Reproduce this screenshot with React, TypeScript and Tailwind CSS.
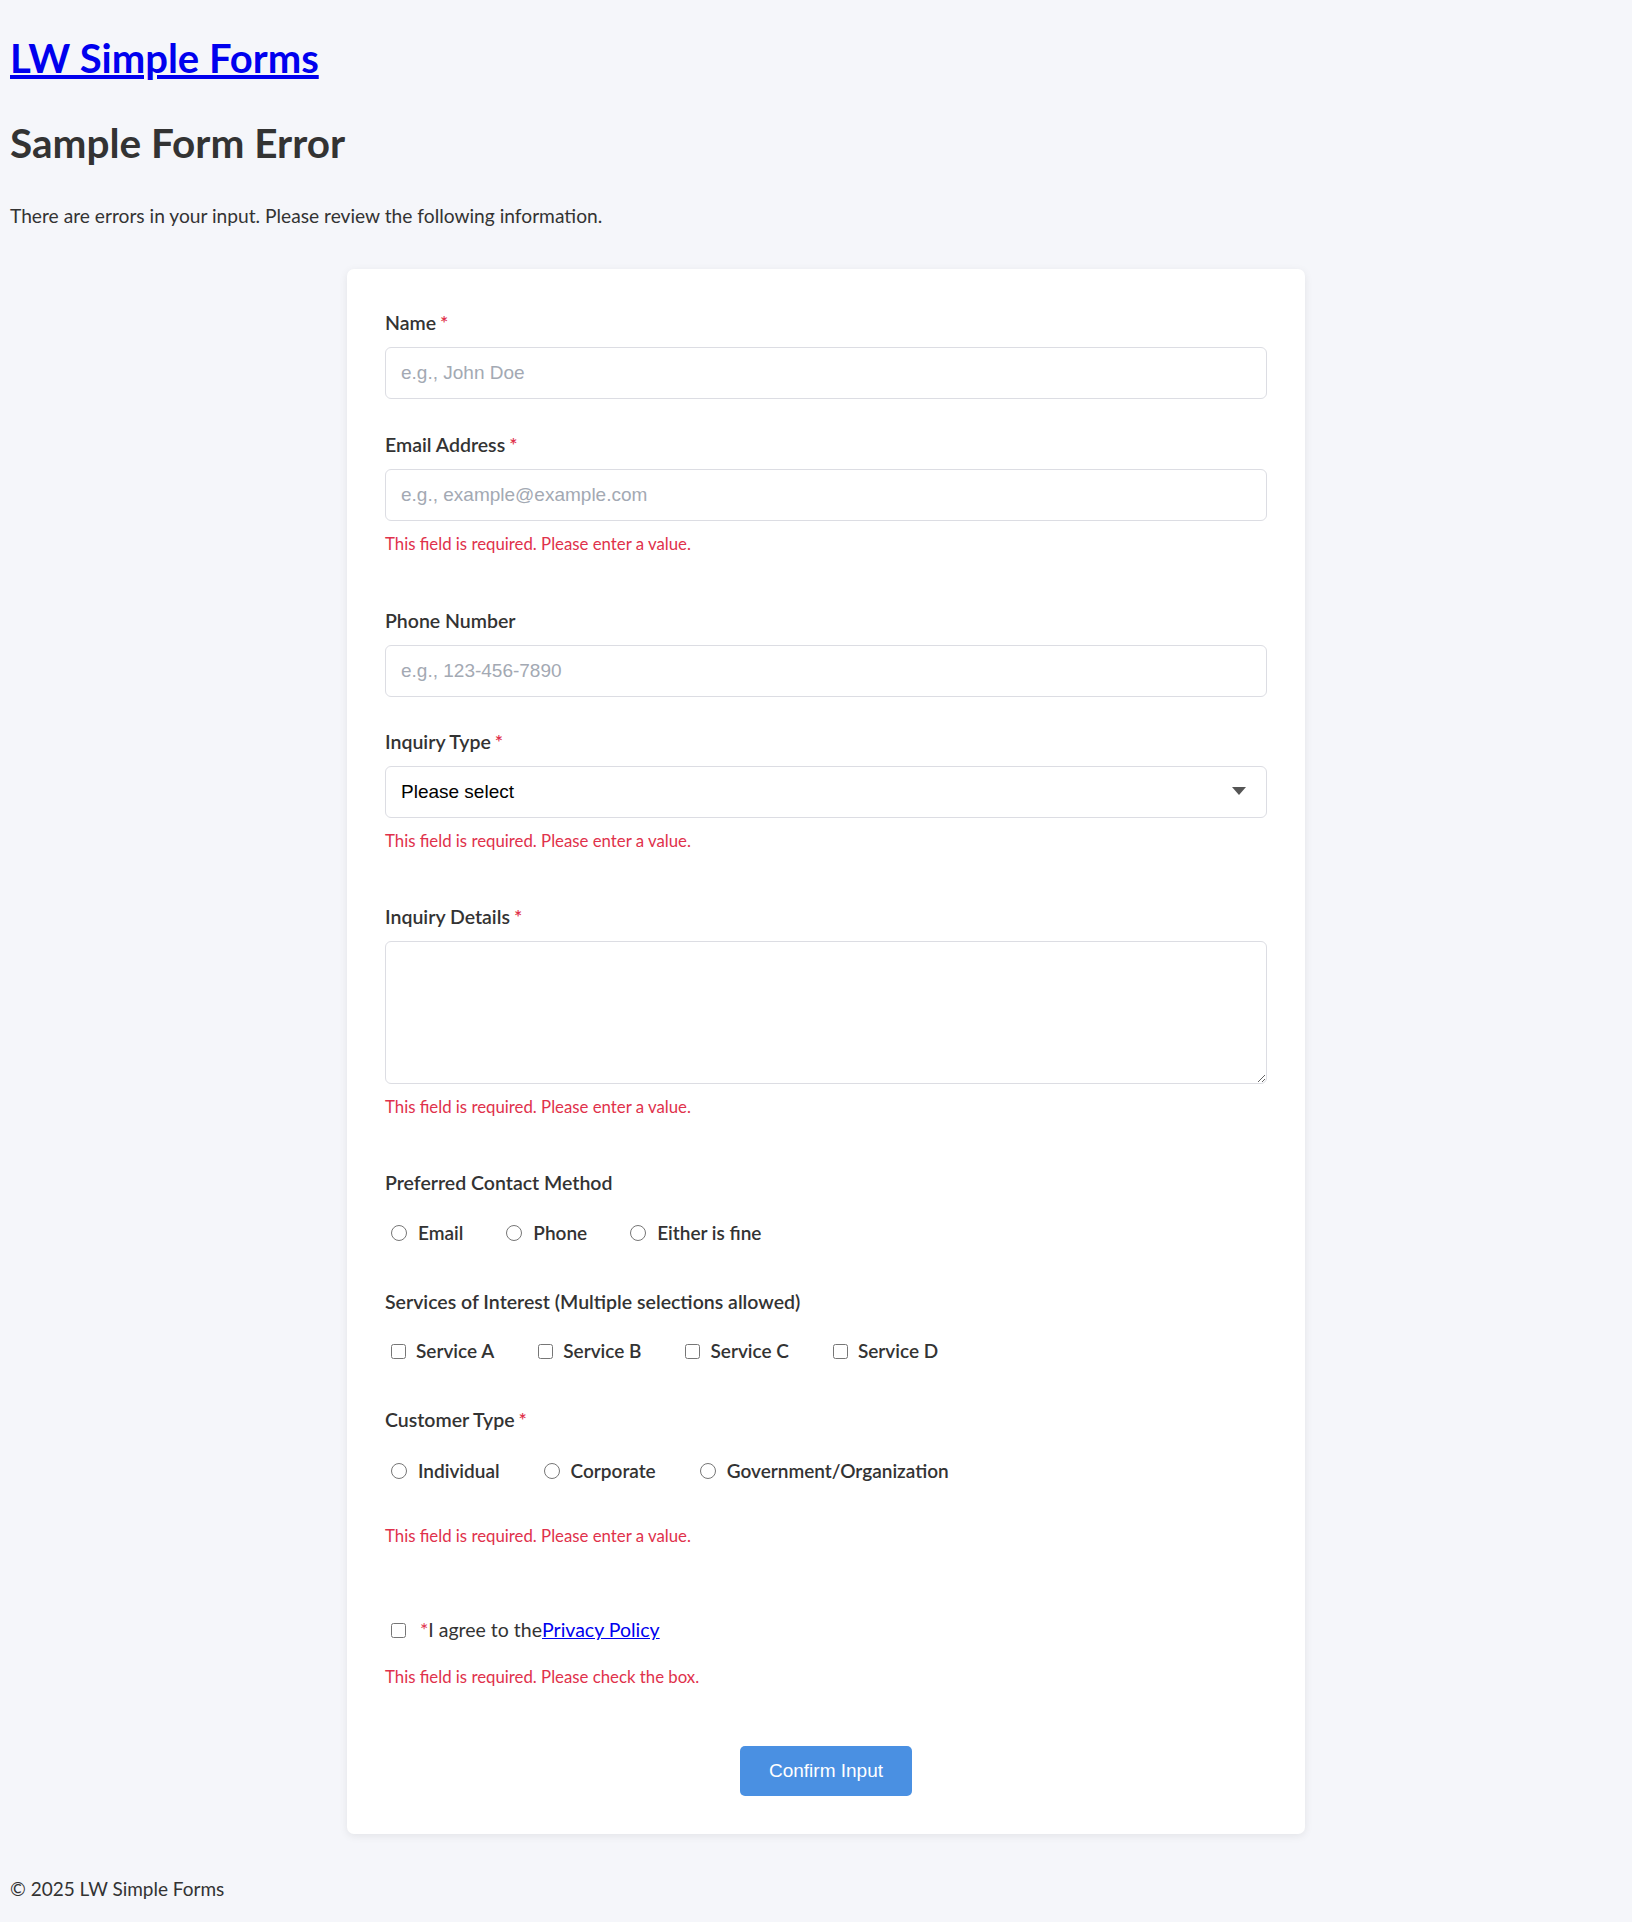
import React from 'react';

const contactMethods = ['Email', 'Phone', 'Either is fine'];
const services = ['Service A', 'Service B', 'Service C', 'Service D'];
const customerTypes = ['Individual', 'Corporate', 'Government/Organization'];

function Required() {
  return <span className="ml-[4px] text-[#e0314b]">*</span>;
}

function FieldLabel({ children, required }: { children: React.ReactNode; required?: boolean }) {
  return (
    <label className="block text-[19.5px] leading-[28px] font-semibold text-[#333]">
      {children}
      {required && <Required />}
    </label>
  );
}

function ErrorText({ children, className = '' }: { children: React.ReactNode; className?: string }) {
  return <p className={`text-[16.8px] leading-[26px] text-[#e0314b] ${className}`}>{children}</p>;
}

const inputClass =
  "block w-full h-[52px] rounded-[6px] border border-[#dcdde3] bg-white px-[15px] font-['Liberation_Sans',Arial,sans-serif] text-[19px] text-[#222] placeholder:text-[#a3a9b3] outline-none";

export default function App() {
  return (
    <div className="min-h-[1922px] bg-[#f5f6fa] px-[10px] font-['Lato',sans-serif] text-[#333]">
      <h1 className="pt-[34px] text-[40px] leading-[48px] font-bold">
        <a href="#" className="text-[#0000ee] underline">
          LW Simple Forms
        </a>
      </h1>
      <h2 className="mt-[37px] text-[40.5px] leading-[48px] font-bold text-[#333]">Sample Form Error</h2>
      <p className="mt-[35px] text-[19.2px] leading-[28px]">
        There are errors in your input. Please review the following information.
      </p>

      {/* form card */}
      <form className="mt-[39px] ml-[337px] w-[958px] rounded-[7px] bg-white px-[38px] pt-[40px] pb-[38px] shadow-[0_2px_8px_rgba(0,0,0,0.08)]">
        <div className="mb-[32px]">
          <FieldLabel required>Name</FieldLabel>
          <input className={`mt-[10px] ${inputClass}`} placeholder="e.g., John Doe" />
        </div>

        <div className="mb-[50px]">
          <FieldLabel required>Email Address</FieldLabel>
          <input className={`mt-[10px] ${inputClass}`} placeholder="e.g., example@example.com" />
          <ErrorText className="mt-[10px]">This field is required. Please enter a value.</ErrorText>
        </div>

        <div className="mb-[31px]">
          <FieldLabel>Phone Number</FieldLabel>
          <input className={`mt-[10px] ${inputClass}`} placeholder="e.g., 123-456-7890" />
        </div>

        <div className="mb-[49px]">
          <FieldLabel required>Inquiry Type</FieldLabel>
          <div className="relative mt-[10px]">
            <select className={`${inputClass} h-[51px] appearance-none text-black`} defaultValue="">
              <option value="">Please select</option>
              <option>General Inquiry</option>
              <option>Support</option>
            </select>
            <svg
              className="pointer-events-none absolute right-[21px] top-[21px]"
              width="14"
              height="8"
              viewBox="0 0 14 8"
            >
              <path d="M0 0 H14 L7 8 Z" fill="#555" />
            </svg>
          </div>
          <ErrorText className="mt-[10px]">This field is required. Please enter a value.</ErrorText>
        </div>

        <div className="mb-[49px]">
          <FieldLabel required>Inquiry Details</FieldLabel>
          <textarea
            className="mt-[10px] block h-[143px] w-full rounded-[6px] border border-[#dcdde3] bg-white px-[15px] py-[12px] font-['Liberation_Sans',Arial,sans-serif] text-[19px] outline-none"
          />
          <ErrorText className="mt-[10px]">This field is required. Please enter a value.</ErrorText>
        </div>

        <div className="mb-[41px]">
          <FieldLabel>Preferred Contact Method</FieldLabel>
          <div className="mt-[22px] flex h-[28px] items-center">
            {contactMethods.map((m) => (
              <label key={m} className="mr-[37px] inline-flex items-center text-[19px] font-semibold text-[#333]">
                <input type="radio" name="contact" className="ml-[6px] mr-[11px] h-[16px] w-[16px]" />
                {m}
              </label>
            ))}
          </div>
        </div>

        <div className="mb-[41px]">
          <FieldLabel>Services of Interest (Multiple selections allowed)</FieldLabel>
          <div className="mt-[21px] flex h-[28px] items-center">
            {services.map((s) => (
              <label key={s} className="mr-[38px] inline-flex items-center text-[19px] font-semibold text-[#333]">
                <input type="checkbox" className="ml-[6px] mr-[10px] h-[15px] w-[15px]" />
                {s}
              </label>
            ))}
          </div>
        </div>

        <div>
          <FieldLabel required>Customer Type</FieldLabel>
          <div className="mt-[23px] flex h-[28px] items-center">
            {customerTypes.map((c) => (
              <label key={c} className="mr-[38px] inline-flex items-center text-[19px] font-semibold text-[#333]">
                <input type="radio" name="customer" className="ml-[6px] mr-[11px] h-[16px] w-[16px]" />
                {c}
              </label>
            ))}
          </div>
          <ErrorText className="mt-[38px]">This field is required. Please enter a value.</ErrorText>
        </div>

        <div className="mt-[67px]">
          <label className="flex h-[28px] items-center text-[19.5px] text-[#333]">
            <input type="checkbox" className="ml-[6px] mr-[14px] h-[15px] w-[15px]" />
            <span className="text-[#e0314b]">*</span>
            <span>I agree to the</span>
            <a href="#" className="text-[#0000ee] underline">
              Privacy Policy
            </a>
          </label>
          <ErrorText className="mt-[20px]">This field is required. Please check the box.</ErrorText>
        </div>

        <div className="mt-[56px] flex justify-center">
          <button
            type="button"
            className="h-[50px] w-[172px] rounded-[5px] bg-[#4a90e2] font-['Liberation_Sans',Arial,sans-serif] text-[19px] text-white"
          >
            Confirm Input
          </button>
        </div>
      </form>

      <footer className="mt-[41px] pb-[20px] text-[19px] leading-[28px] text-[#333]">© 2025 LW Simple Forms</footer>
    </div>
  );
}
